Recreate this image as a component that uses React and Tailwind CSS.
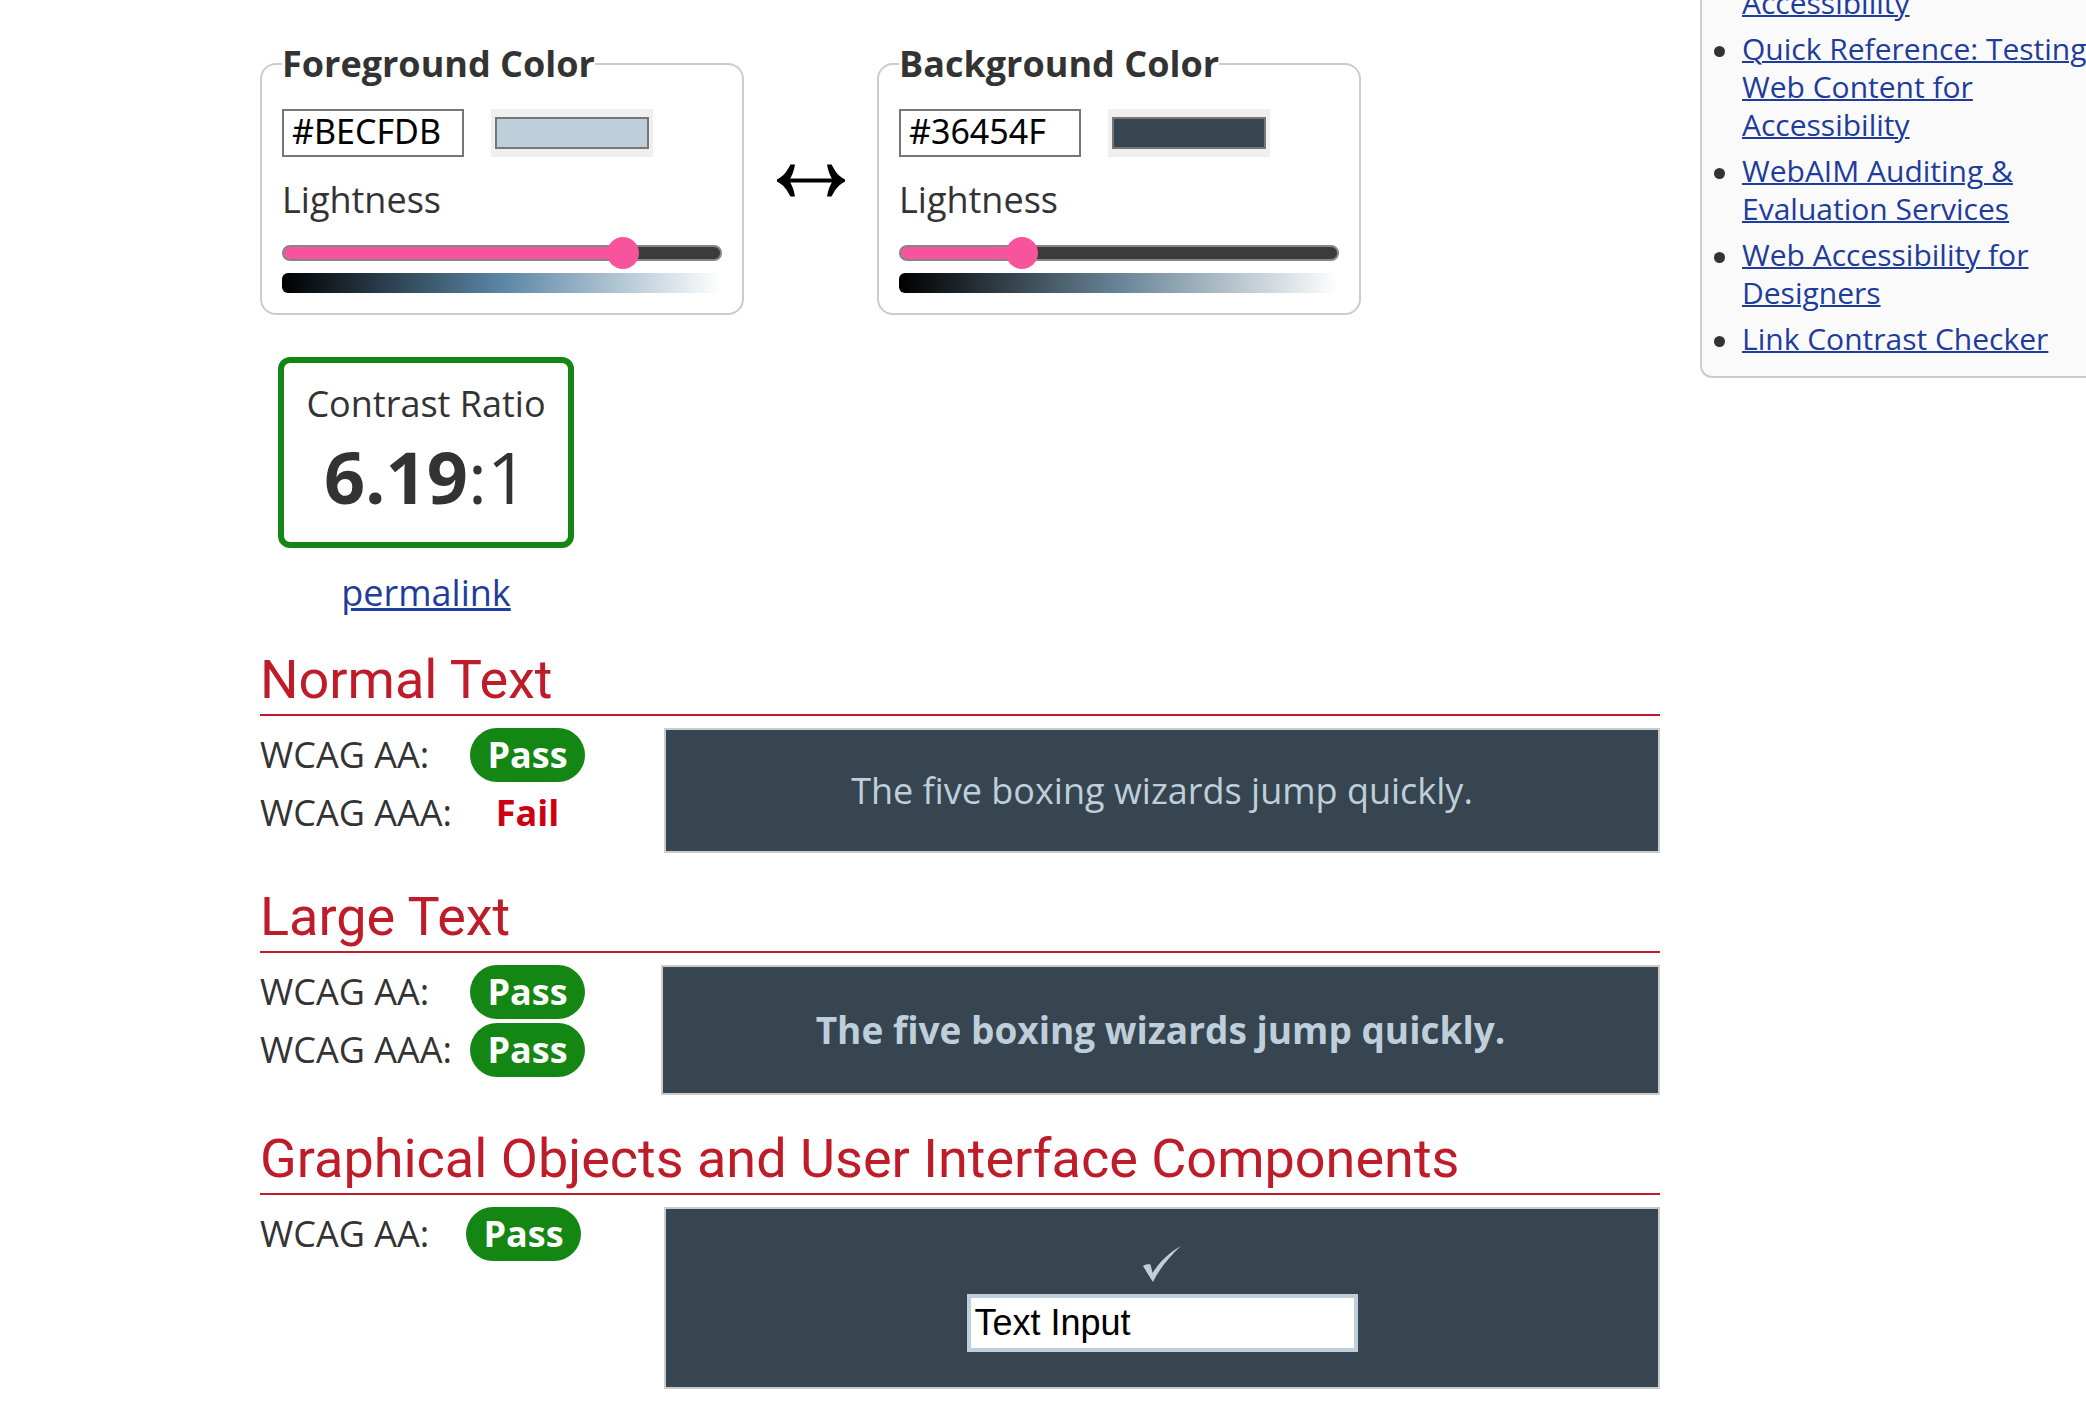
import React, { useState } from "react";

const LINKS = [
  ["Accessibility"],
  ["Quick Reference: Testing", "Web Content for", "Accessibility"],
  ["WebAIM Auditing &", "Evaluation Services"],
  ["Web Accessibility for", "Designers"],
  ["Link Contrast Checker"],
];

function ColorPanel({ id, title, color, level, ramp }) {
  const [hex, setHex] = useState(color);
  const [light, setLight] = useState(level);
  return (
    <fieldset className="w-[484px] rounded-2xl border-2 border-[#cccccc] px-5 pb-5">
      <legend className="text-[36px] font-bold leading-[50px]">{title}</legend>
      <div className="mt-5 flex gap-[27px]">
        <input
          type="text"
          aria-label={title + " hex value"}
          value={hex}
          onChange={(e) => setHex(e.target.value)}
          className="h-12 w-[182px] border-2 border-[#767676] bg-white px-2 pb-1 font-['Noto_Sans','Open_Sans',sans-serif] text-[34px] leading-10 text-black"
        />
        <input
          type="color"
          aria-label={title + " picker"}
          value={hex.toLowerCase()}
          onChange={(e) => setHex(e.target.value.toUpperCase())}
          className="h-12 w-[162px] appearance-none bg-[#efefef] px-1 py-2 [&::-webkit-color-swatch-wrapper]:p-0 [&::-webkit-color-swatch]:rounded-none [&::-webkit-color-swatch]:border-2 [&::-webkit-color-swatch]:border-[#767676]"
        />
      </div>
      <label htmlFor={id} className="mt-4 block text-[36px] leading-[54px]">
        Lightness
      </label>
      <input
        id={id}
        type="range"
        min="0"
        max="100"
        value={light}
        onChange={(e) => setLight(Number(e.target.value))}
        style={{ "--fill": light + "%" }}
        className="mt-2.5 block h-8 w-full appearance-none bg-transparent [&::-webkit-slider-runnable-track]:h-4 [&::-webkit-slider-runnable-track]:rounded-full [&::-webkit-slider-runnable-track]:border-2 [&::-webkit-slider-runnable-track]:border-[#858585] [&::-webkit-slider-runnable-track]:bg-[linear-gradient(to_right,#f7549d_var(--fill),#3b3b3b_var(--fill))] [&::-webkit-slider-thumb]:-mt-2.5 [&::-webkit-slider-thumb]:size-8 [&::-webkit-slider-thumb]:appearance-none [&::-webkit-slider-thumb]:rounded-full [&::-webkit-slider-thumb]:bg-[#f7549d]"
      />
      <div className={"mt-1 h-5 rounded-md " + ramp} />
    </fieldset>
  );
}

function Verdict({ pass }) {
  return pass ? (
    <span className="flex h-[54px] w-[115px] items-center justify-center rounded-full bg-[#138613] text-[36px] font-bold text-white">
      Pass
    </span>
  ) : (
    <span className="flex h-[54px] w-[115px] items-center justify-center text-[36px] font-bold text-[#cc0011]">
      Fail
    </span>
  );
}

function Section({ title, children }) {
  return (
    <section>
      <h2 className="mb-3 border-b-2 border-[#bf1c2a] font-[Roboto,sans-serif] text-[54px] leading-[68px] text-[#bf1c2a]">
        {title}
      </h2>
      <div className="flex items-start justify-between">{children}</div>
    </section>
  );
}

function Results({ rows, label }) {
  return (
    <dl className={"grid shrink-0 gap-y-1 " + label}>
      {rows.map(([name, pass]) => (
        <React.Fragment key={name}>
          <dt className="text-[36px] leading-[54px]">{name}</dt>
          <dd>
            <Verdict pass={pass} />
          </dd>
        </React.Fragment>
      ))}
    </dl>
  );
}

export default function App() {
  return (
    <div className="flex min-h-screen items-start overflow-hidden bg-white font-['Open_Sans',sans-serif] text-[#333333]">
      <main className="ml-[260px] min-w-0 flex-1 pt-[39px]">
        <div className="flex items-center">
          <ColorPanel
            id="fg-light"
            title="Foreground Color"
            color="#BECFDB"
            level={80}
            ramp="bg-[linear-gradient(to_right,#000000,#5b86a4,#ffffff)]"
          />
          <button type="button" aria-label="Swap colors" className="flex w-[133px] items-center justify-center pt-1.5">
            <svg viewBox="0 0 68 34" className="h-[34px] w-[68px]" fill="#000000">
              <path d="M10 15.500H58V19.500H10Z" />
              <path d="M0 16.500C7 13 10 8 13.500 1.500H18C17 8 15 13 12 17.500C15 22 17 27 18 33.500H13.500C10 27 7 22 0 18.500Z" />
              <path d="M68 16.500C61 13 58 8 54.500 1.500H50C51 8 53 13 56 17.500C53 22 51 27 50 33.500H54.500C58 27 61 22 68 18.500Z" />
            </svg>
          </button>
          <ColorPanel
            id="bg-light"
            title="Background Color"
            color="#36454F"
            level={26}
            ramp="bg-[linear-gradient(to_right,#000000,#688497,#ffffff)]"
          />
        </div>

        <div className="ml-[18px] mt-[42px] flex w-fit flex-col items-center">
          <div className="w-[296px] rounded-xl border-[6px] border-[#138613] pb-[18px] pt-4 text-center">
            <div className="text-[36px] leading-[50px]">Contrast Ratio</div>
            <div className="text-[72px] leading-[95px]">
              <b>6.19</b>:1
            </div>
          </div>
          <a href="#permalink" className="mt-5 text-[36px] leading-[50px] text-[#1e3c9c] underline">
            permalink
          </a>
        </div>

        <div className="mt-7 flex flex-col gap-[30px]">
          <Section title="Normal Text">
            <Results rows={[["WCAG AA:", true], ["WCAG AAA:", false]]} label="grid-cols-[210px_auto]" />
            <div className="flex h-[125px] w-[996px] items-center justify-center border-2 border-[#cccccc] bg-[#36454f] text-[36px] text-[#becfdb]">
              The five boxing wizards jump quickly.
            </div>
          </Section>
          <Section title="Large Text">
            <Results rows={[["WCAG AA:", true], ["WCAG AAA:", true]]} label="grid-cols-[210px_auto]" />
            <div className="flex h-[130px] w-[999px] items-center justify-center border-2 border-[#cccccc] bg-[#36454f] text-[37px] font-bold text-[#becfdb]">
              The five boxing wizards jump quickly.
            </div>
          </Section>
          <Section title="Graphical Objects and User Interface Components">
            <Results rows={[["WCAG AA:", true]]} label="grid-cols-[206px_auto]" />
            <div className="flex h-[182px] w-[996px] flex-col items-center border-2 border-[#cccccc] bg-[#36454f] pt-[37px]">
              <svg viewBox="0 0 38 36" className="h-9 w-[38px]" fill="#becfdb" role="img" aria-label="Check mark">
                <path d="M0 20C2 18.500 5 17.800 7.500 18.500L9.500 27C16 17 25 7 38 0C27 10 17 22 10 36C8 33 3 25 0 20Z" />
              </svg>
              <input
                type="text"
                aria-label="Text input sample"
                defaultValue="Text Input"
                className="mt-3 h-[58px] w-[391px] border-4 border-[#becfdb] bg-white px-1 font-['Liberation_Sans',sans-serif] text-[36px] text-black"
              />
            </div>
          </Section>
        </div>
      </main>

      <aside className="-mt-[18px] ml-10 w-[386px] shrink-0 whitespace-nowrap rounded-bl-xl border-2 border-r-0 border-[#cccccc] bg-[#fafafa] pb-[18px] pl-10">
        <ul className="flex flex-col gap-2">
          {LINKS.map((lines, i) => (
            <li key={i} className="relative text-[30px] leading-[38px]">
              {i > 0 && <span className="absolute -left-7 top-4 size-[11px] rounded-full bg-[#333333]" />}
              <a href={"#resource-" + i} className="text-[#1e3c9c] underline decoration-2">
                {lines.map((line, n) => (
                  <React.Fragment key={n}>
                    {n > 0 && <br />}
                    {line}
                  </React.Fragment>
                ))}
              </a>
            </li>
          ))}
        </ul>
      </aside>
    </div>
  );
}
